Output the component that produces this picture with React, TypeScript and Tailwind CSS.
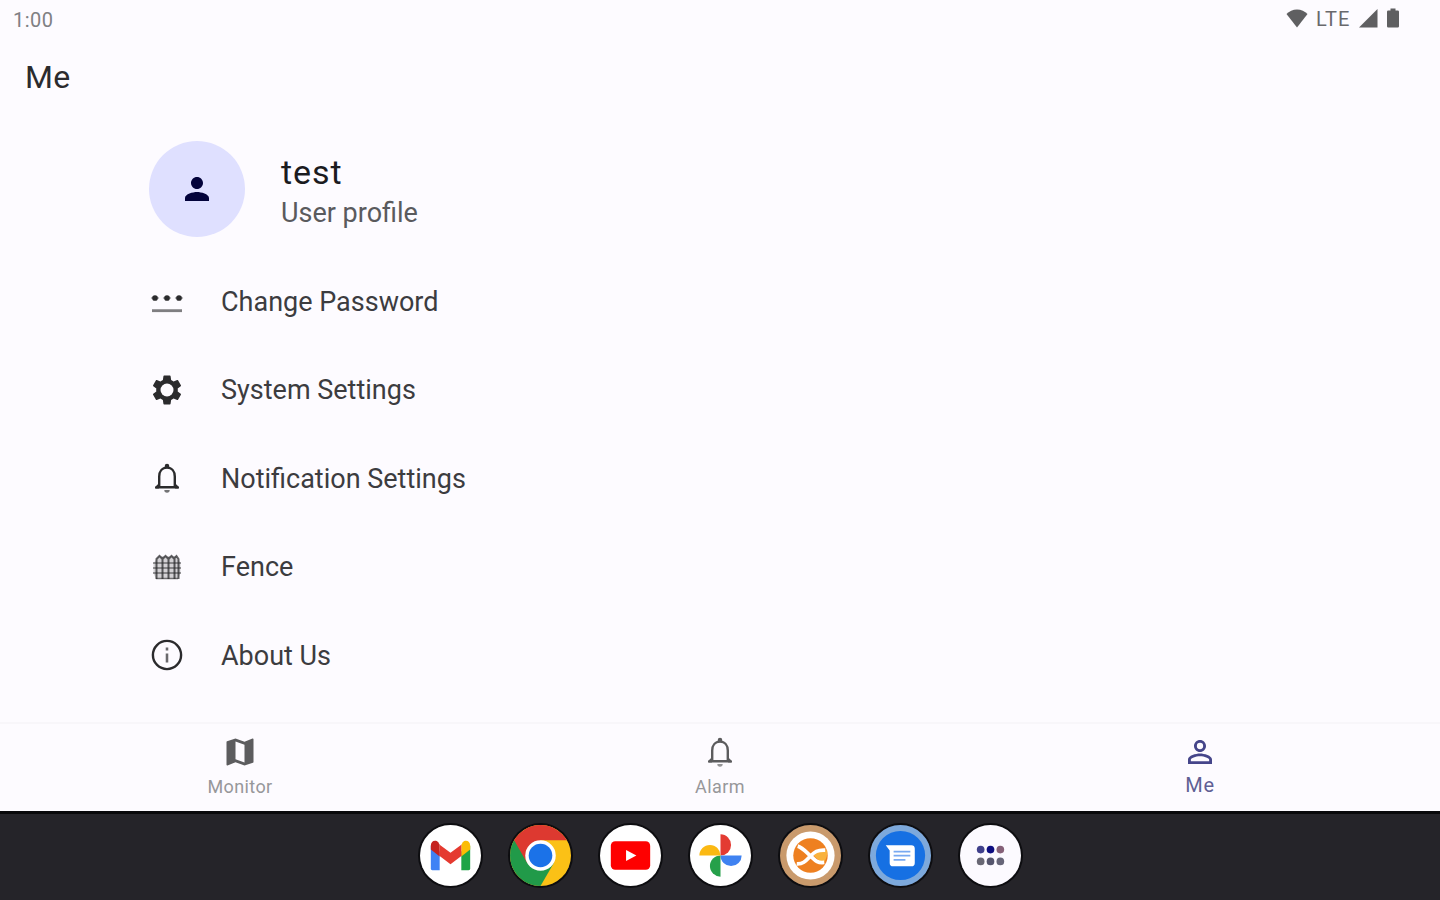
import type { ReactNode } from "react";
import { MdMap, MdPerson, MdPersonOutline, MdSettings } from "react-icons/md";

function PasswordIcon() {
  return (
    <svg viewBox="0 0 24 24" className="w-9 h-9" fill="currentColor">
      <circle cx="4" cy="10" r="1.9" />
      <circle cx="12" cy="10" r="1.9" />
      <circle cx="20" cy="10" r="1.9" />
      <path d="M1.3 9.5h5.400v1H1.300zM9.300 9.500h5.400v1H9.300zM17.300 9.500h5.400v1h-5.400z" opacity="0.4" />
      <path d="M2 17.500h20v1.900H2z" opacity="0.6" />
    </svg>
  );
}

function GearIcon() {
  return (
    <span className="relative">
      <MdSettings className="w-9 h-9" />
      <span className="absolute left-1/2 top-1/2 h-[13px] w-[13px] -translate-x-1/2 -translate-y-1/2 rounded-full bg-[#fdfbff]" />
    </span>
  );
}

function BellIcon() {
  return (
    <svg viewBox="0 0 24 24" className="w-9 h-9" fill="currentColor">
      <path
        d="M4.500 18.200H19.500M6.800 18V11C6.800 7.600 8.700 5.100 12 5.100S17.200 7.600 17.200 11V18"
        fill="none"
        stroke="currentColor"
        strokeWidth="1.600"
      />
      <path d="M4 19V18l2.600-2.500v3.500zM20 19V18l-2.600-2.500v3.500z" />
      <path d="M10.500 5.500V4a1.500 1.500 0 0 1 3 0v1.500z" />
      <path d="M10.200 20h3.600a1.800 1.800 0 0 1-3.600 0z" opacity="0.65" />
    </svg>
  );
}

function FenceIcon() {
  return (
    <svg viewBox="0 0 36 36" className="w-9 h-9" fill="none" stroke="currentColor">
      <path
        d="M7 30 4.500 24V14L10 7h17l4.500 7v10L29 30Z"
        fill="currentColor"
        stroke="none"
        opacity="0.2"
      />
      <path
        d="M7.500 30V10l3-3 3 3v20M13.500 10l3-3 3 3v20M19.500 10l3-3 3 3v20M25.500 9l2-2 2 3v20"
        strokeWidth="2"
        opacity="0.75"
      />
      <path d="M4 14h28M4 19h28M4 24h28M7 29.500h22" strokeWidth="1.700" opacity="0.6" />
    </svg>
  );
}

function InfoIcon() {
  return (
    <svg viewBox="0 0 24 24" className="w-9 h-9" fill="none" stroke="currentColor">
      <circle cx="12" cy="12" r="9.400" strokeWidth="1.600" />
      <path d="M12 11v6M12 7v2" strokeWidth="1.700" opacity="0.7" />
    </svg>
  );
}

const menu = [
  { title: "Change Password", icon: <PasswordIcon /> },
  { title: "System Settings", icon: <GearIcon /> },
  { title: "Notification Settings", icon: <BellIcon /> },
  { title: "Fence", icon: <FenceIcon /> },
  { title: "About Us", icon: <InfoIcon /> },
];

function StatusBar() {
  return (
    <div className="flex h-10 items-start justify-between pl-[13px] pr-[41px] text-[#5f5f61]">
      <span className="mt-2 text-[20px] leading-6 tracking-[0.5px] text-[#808083]">1:00</span>
      <div className="mt-[6px] flex h-6 items-center">
        <svg viewBox="0 0 22 20" className="-ml-px w-[22px] h-5" fill="currentColor">
          <path d="M11 19.5 0.5 6C3 3.300 7 1.500 11 1.500S19 3.300 21.500 6Z" />
        </svg>
        <span className="ml-[8px] mt-px w-[38px] text-[20px] leading-6 tracking-[1px] text-[#69696c]">LTE</span>
        <svg viewBox="0 0 20 20" className="ml-[4px] w-5 h-5" fill="currentColor">
          <path d="M1 19.500H19.500V1Z" />
        </svg>
        <svg viewBox="0 0 12 20" className="ml-[9px] w-3 h-5" fill="currentColor">
          <path d="M1.200 2.500H3.500V0.500h5v2h2.300q1.200 0 1.200 1.200v14.600q0 1.200-1.200 1.200H1.200Q0 19.500 0 18.300V3.700Q0 2.500 1.200 2.500Z" />
        </svg>
      </div>
    </div>
  );
}

function NavItem({ label, icon, active }: { label: string; icon: ReactNode; active?: boolean }) {
  return (
    <div className={`flex flex-1 flex-col items-center pt-[10px] ${active ? "text-[#45458a]" : "text-[#5c5c5e]"}`}>
      {icon}
      <span
        className={
          active
            ? "mt-[3px] text-[20px] leading-6 tracking-[0.8px] text-[#5f5f94]"
            : "mt-[5px] text-[18px] leading-6 tracking-[0.4px] text-[#97979a]"
        }
      >
        {label}
      </span>
    </div>
  );
}

function DockIcon({ children }: { children: ReactNode }) {
  return (
    <div className="h-[61px] w-[61px] rounded-full ring-2 ring-[#0d0d10]">
      <svg viewBox="0 0 62 62" className="block h-full w-full">
        {children}
      </svg>
    </div>
  );
}

function Dock() {
  return (
    <div className="flex h-[89px] shrink-0 items-start justify-center gap-[29px] border-t-[3px] border-[#09090b] bg-[#252429] pt-[11px]">
      {/* Gmail */}
      <DockIcon>
        <circle cx="31" cy="31" r="31" fill="#fff" />
        <path d="M11 21v23.500a1.500 1.500 0 0 0 1.500 1.500H20V27Z" fill="#3f82f5" />
        <path d="M51 21v23.500a1.500 1.500 0 0 1-1.500 1.500H42V27Z" fill="#1ea446" />
        <path d="M42 20l1.500-2.500C46.500 14.500 51 16.500 51 21v4l-9 7Z" fill="#fbbc04" />
        <path d="M20 20v12l-9-7v-4c0-4.500 4.500-6.500 7.500-3.500Z" fill="#c5221f" />
        <path d="M20 20l11 8.200L42 20v11.500L31 40 20 31.500Z" fill="#e53a30" />
      </DockIcon>

      {/* Chrome */}
      <DockIcon>
        <circle cx="31" cy="31" r="31" fill="#fbc116" />
        <path d="M31 31 4.200 15.500A31 31 0 0 0 31 62L44.400 38.800Z" fill="#219a49" />
        <path d="M31 31 17.600 38.800 4.200 15.500A31 31 0 0 1 57.800 15.500H31Z" fill="#dd3930" />
        <circle cx="31" cy="31" r="15.500" fill="#fff" />
        <circle cx="31" cy="31" r="12" fill="#1b72e8" />
      </DockIcon>

      {/* YouTube */}
      <DockIcon>
        <circle cx="31" cy="31" r="31" fill="#fff" />
        <rect x="11" y="16.500" width="40" height="29" rx="4.500" fill="#fe0000" />
        <path d="M26.500 25.500 37 31l-10.500 5.500Z" fill="#fff" />
      </DockIcon>

      {/* Photos */}
      <DockIcon>
        <circle cx="31" cy="31" r="31" fill="#fff" />
        <path d="M31 9.500a10.750 10.750 0 0 1 0 21.500Z" fill="#e33b32" />
        <path d="M52.500 31a10.750 10.750 0 0 1-21.500 0Z" fill="#3f82f1" />
        <path d="M31 52.500a10.750 10.750 0 0 1 0-21.500Z" fill="#26a04a" />
        <path d="M9.500 31a10.750 10.750 0 0 1 21.500 0Z" fill="#fbb913" />
      </DockIcon>

      <DockIcon>
        <circle cx="31" cy="31" r="31" fill="#c99a6c" />
        <circle cx="31" cy="31" r="24.500" fill="#fff" />
        <circle cx="31" cy="31" r="17.500" fill="#ee8020" />
        <path d="M34 31l8-6 6 1a17.500 17.500 0 0 1-3.500 12l-3.500-1Z" fill="#f9b23c" />
        <path
          d="M18 21.500C23 23 27 28 31 31.500S37 39 45 38M17 39.500C24 40 27 35.500 31 31.500S38 25 46 25.500"
          fill="none"
          stroke="#fff"
          strokeWidth="3.800"
        />
      </DockIcon>

      {/* Messages */}
      <DockIcon>
        <circle cx="31" cy="31" r="31" fill="#7da9dc" />
        <circle cx="31" cy="31" r="25" fill="#1670e3" />
        <path d="M16 20.500H42q3.500 0 3.500 3.500V38.500Q45.500 42 42 42H23.500Q20 42 20 38.500V26Z" fill="#fff" />
        <path d="M24 27H41M24 31.200H41M24 35.400H36" stroke="#78a9f1" strokeWidth="1.700" />
      </DockIcon>

      {/* All apps */}
      <DockIcon>
        <circle cx="31" cy="31" r="31" fill="#fcfaff" />
        <circle cx="21" cy="25" r="3.900" fill="#40408c" />
        <circle cx="31" cy="25" r="3.900" fill="#0d0d80" />
        <circle cx="41" cy="25" r="3.900" fill="#856078" />
        <circle cx="21" cy="37" r="3.900" fill="#686774" />
        <circle cx="31" cy="37" r="3.900" fill="#55556d" />
        <circle cx="41" cy="37" r="3.900" fill="#666578" />
      </DockIcon>
    </div>
  );
}

export default function App() {
  return (
    <div className="flex h-[900px] w-[1440px] flex-col overflow-hidden bg-[#fdfbff] font-[Roboto,sans-serif] text-[#1b1b1f]">
      <StatusBar />
      <header className="flex h-[74px] items-center pl-[25px]">
        <h1 className="text-[32px] leading-10 tracking-[0.3px] text-[#2b2b2e]">Me</h1>
      </header>

      <main className="flex-1 pl-[149px] pt-[27px]">
        <div className="flex items-center">
          <div className="flex h-24 w-24 items-center justify-center rounded-full bg-[#dfe0ff] text-[#03033b]">
            <MdPerson className="w-9 h-9" />
          </div>
          <div className="ml-9 pt-[7px]">
            <div className="text-[34px] leading-10 tracking-[0.9px]">test</div>
            <div className="mt-px text-[27px] leading-10 text-[#5a5a5d]">User profile</div>
          </div>
        </div>

        <ul className="mt-[20px]">
          {menu.map((item) => (
            <li key={item.title} className="flex h-[88.5px] items-center text-[#2b2b2d]">
              {item.icon}
              <span className="ml-9 whitespace-nowrap pt-px text-[27px] leading-9 text-[#3c3c3f]">{item.title}</span>
            </li>
          ))}
        </ul>
      </main>

      <nav className="flex h-[89px] shrink-0 border-t-2 border-[#f8f6fa] bg-[#fdfbff]">
        <NavItem label="Monitor" icon={<MdMap className="w-9 h-9" />} />
        <NavItem label="Alarm" icon={<BellIcon />} />
        <NavItem label="Me" icon={<MdPersonOutline className="w-9 h-9" />} active />
      </nav>
      <Dock />
    </div>
  );
}
